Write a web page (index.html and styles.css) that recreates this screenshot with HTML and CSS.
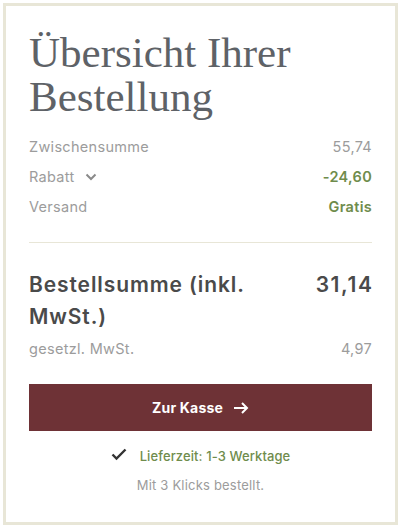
FILE: index.html
```html
<!DOCTYPE html>
<html lang="de">
<head>
<meta charset="utf-8">
<link rel="stylesheet" href="styles.css">
</head>
<body>
<div class="card">
  <h1 class="title">Übersicht Ihrer Bestellung</h1>
  <div class="rows">
    <div class="row"><span class="label">Zwischensumme</span><span class="value">55,74</span></div>
    <div class="row"><span class="label">Rabatt <svg class="chev" width="12" height="8" viewBox="0 0 12 8"><path d="M1.5 1.5 L6 6 L10.5 1.5" fill="none" stroke="#8a8a8a" stroke-width="2"/></svg></span><span class="value green">-24,60</span></div>
    <div class="row"><span class="label">Versand</span><span class="value green">Gratis</span></div>
  </div>
  <div class="divider"></div>
  <div class="total">
    <span class="total-label">Bestellsumme (inkl. MwSt.)</span>
    <span class="total-value">31,14</span>
  </div>
  <div class="row tax"><span class="label">gesetzl. MwSt.</span><span class="value">4,97</span></div>
  <button class="checkout">Zur Kasse <svg class="arrow" width="16" height="12" viewBox="0 0 16 12"><path d="M1 6 H14 M9 1 L14 6 L9 11" fill="none" stroke="#fff" stroke-width="2"/></svg></button>
  <div class="delivery"><svg class="check" width="16" height="13" viewBox="0 0 16 13"><path d="M1.5 6.5 L5.5 10.5 L14.5 1.5" fill="none" stroke="#333" stroke-width="2.4"/></svg><span>Lieferzeit: 1-3 Werktage</span></div>
  <div class="clicks">Mit 3 Klicks bestellt.</div>
</div>
</body>
</html>
```
FILE: styles.css
```css
html, body { margin: 0; padding: 0; background: #fff; }
body { padding: 3px; }
.card {
  box-sizing: border-box;
  width: 395px;
  height: 522px;
  border: 3px solid #e8e6d7;
  padding: 25px 23px 0 23px;
  font-family: Inter, "Liberation Sans", sans-serif;
  letter-spacing: 0.3px;
}
.title {
  margin: 0;
  font-family: "Liberation Serif", serif;
  font-weight: 400;
  font-size: 43px;
  line-height: 44px;
  color: #5e6267;
  letter-spacing: 0;
}
.rows { margin-top: 12px; display: flex; flex-direction: column; }
.row {
  display: flex;
  justify-content: space-between;
  align-items: center;
  height: 30px;
  font-size: 14.5px;
  color: #9c9c9c;
}
.label { display: flex; align-items: center; gap: 10px; }
.chev { margin-top: 1px; }
.green { color: #6f8c4c; font-weight: 600; }
.divider { height: 1px; background: #e8e6d7; margin: 21px 0 0; }
.total {
  display: flex;
  justify-content: space-between;
  align-items: flex-start;
  margin-top: 26px;
  font-size: 21px;
  line-height: 32px;
  font-weight: 600;
  color: #4a4a4a;
  letter-spacing: 0.9px;
}
.total-label { width: 240px; }
.total-value { letter-spacing: 1.6px; margin-right: -1.6px; }
.tax { font-size: 14.5px; margin-top: 0; }
.checkout {
  display: flex;
  align-items: center;
  justify-content: center;
  gap: 10px;
  width: 100%;
  height: 47px;
  margin-top: 21px;
  border: 0;
  background: #6e3236;
  color: #fff;
  font-family: Inter, "Liberation Sans", sans-serif;
  font-weight: 700;
  font-size: 14px;
  letter-spacing: 0.2px;
}
.delivery {
  display: flex;
  justify-content: center;
  align-items: center;
  gap: 13px;
  margin-top: 17px;
  font-size: 13px;
  color: #6f8c4c;
  font-weight: 500;
  letter-spacing: 0.1px;
}
.check { margin-top: -4px; }
.clicks {
  text-align: center;
  margin-top: 13px;
  font-size: 13px;
  color: #9c9c9c;
  letter-spacing: 0.2px;
}
```
